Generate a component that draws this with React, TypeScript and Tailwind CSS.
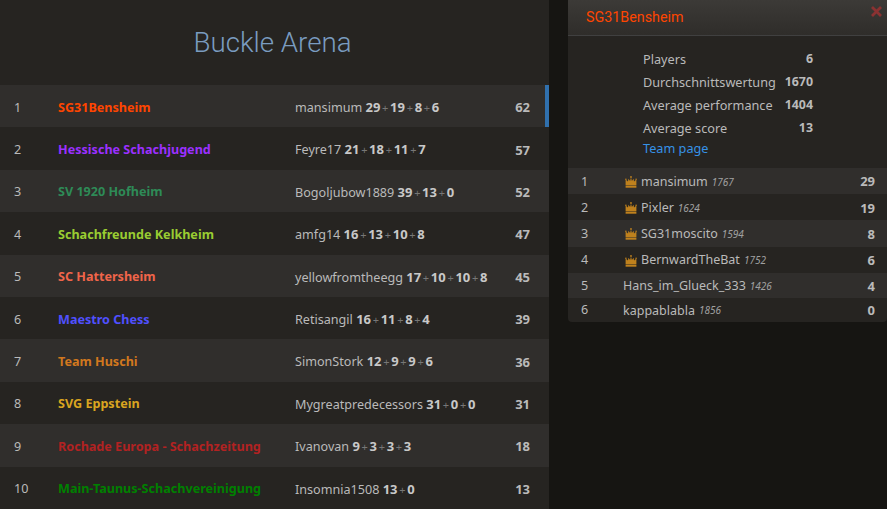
const teams = [
  { r: 1, name: "SG31Bensheim", color: "text-[#ff4500]", player: "mansimum", s: [29, 19, 8, 6], total: 62 },
  { r: 2, name: "Hessische Schachjugend", color: "text-[#9b30ff]", player: "Feyre17", s: [21, 18, 11, 7], total: 57 },
  { r: 3, name: "SV 1920 Hofheim", color: "text-[#2e8b57]", player: "Bogoljubow1889", s: [39, 13, 0], total: 52 },
  { r: 4, name: "Schachfreunde Kelkheim", color: "text-[#9acd32]", player: "amfg14", s: [16, 13, 10, 8], total: 47 },
  { r: 5, name: "SC Hattersheim", color: "text-[#f0654a]", player: "yellowfromtheegg", s: [17, 10, 10, 8], total: 45 },
  { r: 6, name: "Maestro Chess", color: "text-[#5050ff]", player: "Retisangil", s: [16, 11, 8, 4], total: 39 },
  { r: 7, name: "Team Huschi", color: "text-[#d2781e]", player: "SimonStork", s: [12, 9, 9, 6], total: 36 },
  { r: 8, name: "SVG Eppstein", color: "text-[#daa520]", player: "Mygreatpredecessors", s: [31, 0, 0], total: 31 },
  { r: 9, name: "Rochade Europa - Schachzeitung", color: "text-[#b22222]", player: "Ivanovan", s: [9, 3, 3, 3], total: 18 },
  { r: 10, name: "Main-Taunus-Schachvereinigung", color: "text-[#008000]", player: "Insomnia1508", s: [13, 0], total: 13 },
];

const stats = [
  ["Players", "6"],
  ["Durchschnittswertung", "1670"],
  ["Average performance", "1404"],
  ["Average score", "13"],
];

const players = [
  { r: 1, name: "mansimum", rating: 1767, score: 29, crown: true },
  { r: 2, name: "Pixler", rating: 1624, score: 19, crown: true },
  { r: 3, name: "SG31moscito", rating: 1594, score: 8, crown: true },
  { r: 4, name: "BernwardTheBat", rating: 1752, score: 6, crown: true },
  { r: 5, name: "Hans_im_Glueck_333", rating: 1426, score: 4, crown: false },
  { r: 6, name: "kappablabla", rating: 1856, score: 0, crown: false },
];

function Crown() {
  return (
    <svg width="12" height="12" viewBox="0 0 12 12" className="shrink-0 text-[#bf811d]" fill="currentColor">
      <path d="M.6 3.6 3 5.4 3.4 2.8 5.1 5 6 1.6 6.9 5 8.6 2.8 9 5.4 11.4 3.6V9.4H.6Z" />
      <rect x=".6" y="10" width="10.8" height="1.7" />
      <circle cx=".9" cy="3.2" r=".8" />
      <circle cx="6" cy="1" r=".9" />
      <circle cx="11.1" cy="3.2" r=".8" />
    </svg>
  );
}

export default function App() {
  return (
    <div className="h-[509px] w-[887px] overflow-hidden flex items-start bg-[#161512] text-[#bababa] text-[12.6px] font-['Noto_Sans',sans-serif]">
      <main className="w-[549px] h-[509px] shrink-0 overflow-hidden bg-[#262421]">
        <h1 className="h-[85px] pr-[4px] flex items-center justify-center text-[27.7px] font-light font-['Roboto',sans-serif] text-[#7a9cc0]">
          Buckle Arena
        </h1>
        {teams.map((t) => (
          <div
            key={t.r}
            className={`relative h-[42.4px] pt-[3.6px] flex items-center ${t.r % 2 ? "bg-[#302e2c]" : ""}`}
          >
            <span className="w-[58px] pl-[14px] shrink-0">{t.r}</span>
            <span className={`w-[237px] shrink-0 font-bold whitespace-nowrap ${t.color}`}>{t.name}</span>
            <span className="flex-1 whitespace-nowrap">
              {t.player}{" "}
              {t.s.map((n, i) => (
                <span key={i}>
                  {i > 0 && <span className="text-[#777] mx-[1.7px] text-[11px]">+</span>}
                  <strong className="font-bold text-[13px] text-[#c8c8c8]">{n}</strong>
                </span>
              ))}
            </span>
            <strong className="w-[19px] mr-[19px] text-right text-[13px] font-bold text-[#bababa]">{t.total}</strong>
            {t.r === 1 && <span className="absolute right-0 top-0 bottom-0 w-[4px] bg-[#3070ad]" />}
          </div>
        ))}
      </main>

      <aside className="ml-[19px] w-[319px] h-[322px] shrink-0 bg-[#262421] rounded-b-[4px] overflow-hidden">
        <div className="relative h-[36px] pl-[18px] flex items-center border-b border-[#404040] bg-gradient-to-b from-[#3c3a37] to-[#2f2d2a]">
          <span className="text-[14.3px] font-['Roboto',sans-serif] text-[#ff4500]">SG31Bensheim</span>
          <span className="absolute right-[5px] top-[6px] text-[#8a3232]">
            <svg width="11" height="11" viewBox="0 0 11 11" fill="none" stroke="currentColor" strokeWidth="2.8">
              <path d="M1 1 10 10M10 1 1 10" />
            </svg>
          </span>
        </div>
        <div className="pl-[75px] pt-[12px] w-[245px]">
          {stats.map(([k, v]) => (
            <div key={k} className="h-[23px] flex items-center justify-between whitespace-nowrap">
              <span className="text-[12.7px]">{k}</span>
              <strong className="font-bold text-[12.4px]">{v}</strong>
            </div>
          ))}
          <a className="block text-[#3692e7] text-[12.7px] leading-[17px]">Team page</a>
        </div>
        <div className="mt-[11px]">
          {players.map((p) => (
            <div key={p.r} className={`flex items-center pt-[2px] ${p.crown ? "h-[26.2px]" : p.r === 5 ? "h-[25.2px]" : "h-[24px]"} ${p.r % 2 ? "bg-[#302e2c]" : ""}`}>
              <span className="w-[55px] pl-[13px] shrink-0">{p.r}</span>
              <span className="flex-1 flex items-center whitespace-nowrap text-[12.5px]">
                {p.crown && (
                  <span className="mr-[4px] ml-[2px]">
                    <Crown />
                  </span>
                )}
                {p.name}
                <em className="ml-[4px] text-[10px] text-[#a0a0a0]">{p.rating}</em>
              </span>
              <strong className="pr-[12px] text-[13px] font-bold text-[#bababa]">{p.score}</strong>
            </div>
          ))}
        </div>
      </aside>
    </div>
  );
}
